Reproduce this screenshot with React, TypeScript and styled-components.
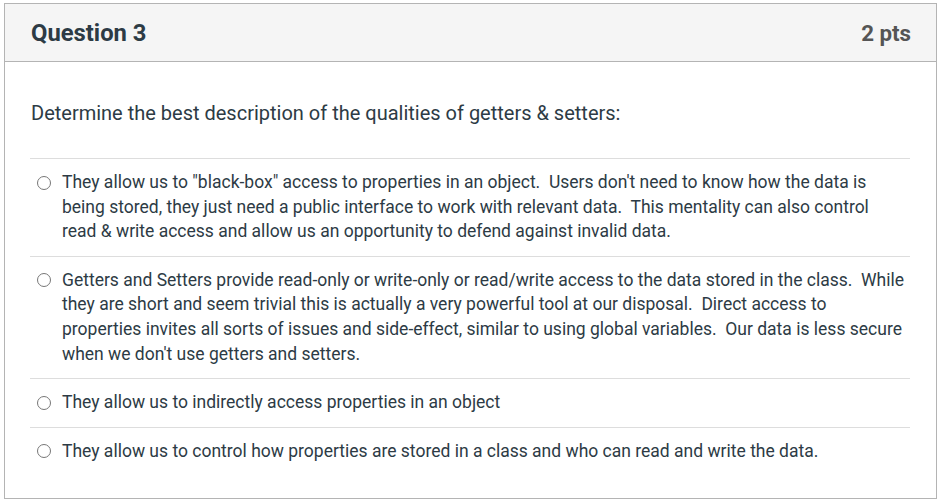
import styled, { createGlobalStyle } from "styled-components";

const answers = [
  "They allow us to \"black-box\" access to properties in an object.\u00a0 Users don't need to know how the data is being stored, they just need a public interface to work with relevant data.\u00a0 This mentality can also control read & write access and allow us an opportunity to defend against invalid data.",
  "Getters and Setters provide read-only or write-only or read/write access to the data stored in the class.\u00a0 While they are short and seem trivial this is actually a very powerful tool at our disposal.\u00a0 Direct access to properties invites all sorts of issues and side-effect, similar to using global variables.\u00a0 Our data is less secure when we don't use getters and setters.",
  "They allow us to indirectly access properties in an object",
  "They allow us to control how properties are stored in a class and who can read and write the data.",
];

const GlobalStyle = createGlobalStyle`
  html, body {
    margin: 0;
    padding: 0;
    background: #ffffff;
    font-family: Roboto, "Liberation Sans", sans-serif;
    color: #2d3b45;
  }
  * {
    box-sizing: border-box;
  }
`;

const Page = styled.div`
  padding: 3px 4px 0 4px;
  width: 940px;
`;

const Card = styled.div`
  width: 933px;
  height: 496px;
  border: 1px solid #b4b4b4;
  display: flex;
  flex-direction: column;
`;

const Header = styled.div`
  height: 58px;
  background: #f5f5f5;
  border-bottom: 1px solid #b4b4b4;
  display: flex;
  align-items: center;
  justify-content: space-between;
  padding: 0 25px 0 26px;
`;

const Title = styled.h2`
  margin: 0;
  font-size: 23.8px;
  font-weight: 700;
  color: #2d3b45;
`;

const Points = styled.div`
  font-size: 22.3px;
  font-weight: 700;
  color: #555555;
`;

const Body = styled.div`
  padding: 38px 26px 0 25px;
`;

const Prompt = styled.p`
  margin: 0 0 31px 1px;
  font-size: 20px;
  line-height: 27px;
`;

const AnswerList = styled.div`
  display: flex;
  flex-direction: column;
`;

const Answer = styled.label`
  display: flex;
  align-items: flex-start;
  gap: 11px;
  padding: 11px 4px 12px 7px;
  border-top: 1px solid #dddddd;
  font-size: 17.5px;
  line-height: 24.6px;
  cursor: pointer;
`;

const Radio = styled.span`
  flex: none;
  width: 14px;
  height: 14px;
  margin-top: 5.5px;
  border: 1px solid #777777;
  border-radius: 50%;
  background: #ffffff;
`;

const AnswerText = styled.span`
  flex: 1;
`;

export default function App() {
  return (
    <>
      <GlobalStyle />
      <Page>
        <Card>
          <Header>
            <Title>Question 3</Title>
            <Points>2 pts</Points>
          </Header>
          <Body>
            <Prompt>Determine the best description of the qualities of getters &amp; setters:</Prompt>
            <AnswerList>
              {answers.map((a, i) => (
                <Answer key={i}>
                  <Radio />
                  <AnswerText>{a}</AnswerText>
                </Answer>
              ))}
            </AnswerList>
          </Body>
        </Card>
      </Page>
    </>
  );
}
